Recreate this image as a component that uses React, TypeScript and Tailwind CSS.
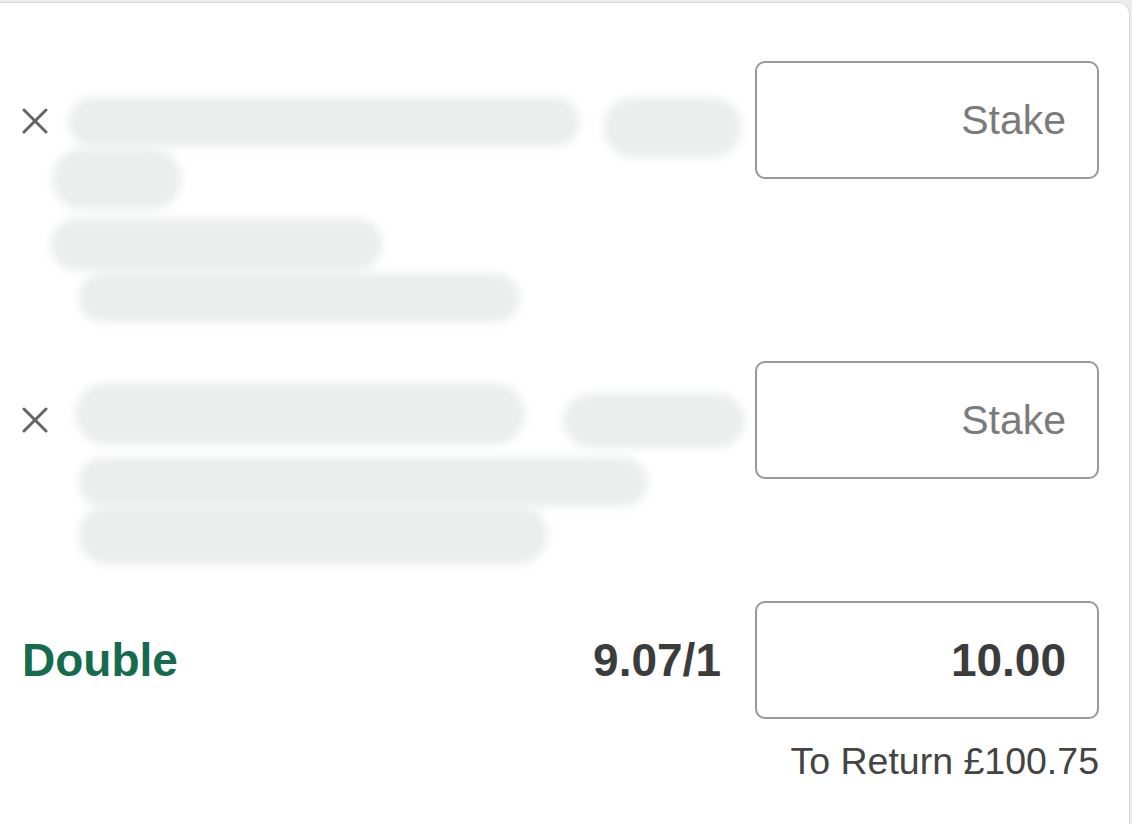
const font = { fontFamily: '"Liberation Sans", Arial, sans-serif' };

const Blob = ({ className }: { className: string }) => (
  <div
    className={"shrink-0 rounded-full bg-[#eceeed] blur-[4px] " + className}
  />
);

const CloseIcon = ({ className }: { className?: string }) => (
  <svg
    viewBox="0 0 26 26"
    className={"size-[26px] shrink-0 " + (className ?? "")}
    fill="none"
    stroke="#646464"
    strokeWidth={3}
    strokeLinecap="round"
  >
    <line x1="2" y1="2" x2="24" y2="24" />
    <line x1="24" y1="2" x2="2" y2="24" />
  </svg>
);

const StakeBox = ({
  value,
  placeholder = "Stake",
}: {
  value?: string;
  placeholder?: string;
}) => (
  <div className="flex h-[118px] w-[344px] shrink-0 items-center justify-end rounded-[10px] border-2 border-[#989898] bg-white pr-[31px]">
    {value ? (
      <span className="text-[46px] leading-none font-bold text-[#3c3c3c]">
        {value}
      </span>
    ) : (
      <span className="text-[41px] leading-none text-[#7b7b7b]">
        {placeholder}
      </span>
    )}
  </div>
);

export default function App() {
  return (
    <div className="min-h-screen bg-[#ececec] pt-[2px]" style={font}>
      <div className="h-[822px] w-[1130px] rounded-tr-[12px] border-t border-r border-[#d9d9d9] bg-white pt-[58px] pr-[30px]">
        {/* first selection */}
        <div className="flex items-start">
          <div className="flex flex-1 flex-col">
            <div className="flex items-start">
              <CloseIcon className="mt-[47px] ml-[22px]" />
              <Blob className="mt-[36px] ml-[20px] h-[50px] w-[512px]" />
              <Blob className="mt-[36px] ml-[23px] h-[61px] w-[139px]" />
            </div>
            <Blob className="-mt-[10px] ml-[52px] h-[62px] w-[130px]" />
            <Blob className="mt-[8px] ml-[50px] h-[53px] w-[333px]" />
            <Blob className="mt-[2px] ml-[78px] h-[50px] w-[442px]" />
          </div>
          <StakeBox />
        </div>

        {/* second selection */}
        <div className="mt-[38px] flex items-start">
          <div className="flex flex-1 flex-col">
            <div className="flex items-start">
              <CloseIcon className="mt-[46px] ml-[22px]" />
              <Blob className="mt-[22px] ml-[27px] h-[62px] w-[450px]" />
              <Blob className="mt-[32px] ml-[38px] h-[55px] w-[182px]" />
            </div>
            <Blob className="mt-[9px] ml-[78px] h-[50px] w-[570px]" />
            <Blob className="-mt-[2px] ml-[78px] h-[60px] w-[470px]" />
          </div>
          <StakeBox />
        </div>

        {/* multiple */}
        <div className="mt-[36px] flex items-center">
          <div className="ml-[22px] flex-1 text-[46px] leading-none font-bold text-[#146b4e]">
            Double
          </div>
          <div className="mr-[34px] text-[46px] leading-none font-bold text-[#3c3c3c]">
            9.07/1
          </div>
          <StakeBox value="10.00" />
        </div>
        <div className="mt-[24px] text-right text-[37.5px] leading-none text-[#444444]">
          To Return £100.75
        </div>
      </div>
    </div>
  );
}
